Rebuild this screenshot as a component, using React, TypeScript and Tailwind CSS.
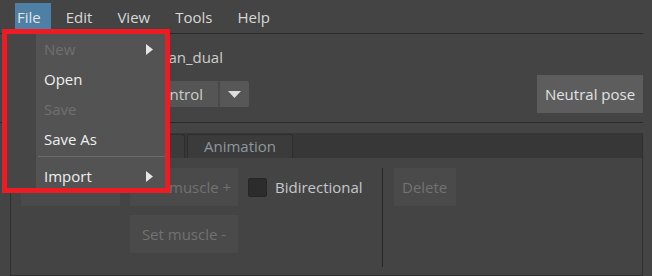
import React from "react";

function MenuArrow() {
  return (
    <svg width="7" height="11" viewBox="0 0 7 11">
      <polygon points="0,0 7,5.5 0,11" fill="#e6e6e6" />
    </svg>
  );
}

function App() {
  const menus = ["File", "Edit", "View", "Tools", "Help"];

  return (
    <div className="relative w-[652px] h-[276px] overflow-hidden bg-[#444444] text-[15px] font-['Open_Sans',sans-serif] flex flex-col">
      {/* menubar */}
      <div className="flex h-[33px] items-start gap-[13px] pl-[15px] pt-[3px] text-[#d8d8d8]">
        {menus.map((m) => (
          <div
            key={m}
            className={
              m === "File"
                ? "flex h-[26px] items-center pl-[2px] pr-[10px] pt-[2px] bg-[#4e7fa5] text-[#e4e4e4]"
                : "flex h-[26px] items-center pl-[2px] pr-[10px] pt-[2px]"
            }
          >
            {m}
          </div>
        ))}
      </div>
      <div className="h-px bg-[#2b2b2b] mr-[9px]" />

      <div className="pl-[10px] pr-[9px]">
        <div className="flex h-[41px] items-center pt-[6px] text-[#cdcdcd]">
          <div className="w-[213px] text-right whitespace-nowrap">an_dual</div>
        </div>
        <div className="flex h-[38px] items-center justify-between">
          <div className="flex h-[26px] text-[#cdcdcd]">
            <div className="flex w-[208px] items-center justify-end pr-[15px] bg-[#555555] rounded-l-[2px] whitespace-nowrap">
              ntrol
            </div>
            <div className="w-[2px] bg-[#4a4a4a]" />
            <div className="flex w-[29px] items-center justify-center bg-[#575757] rounded-r-[2px]">
              <svg width="13" height="7" viewBox="0 0 13 7">
                <polygon points="0,0 13,0 6.5,7" fill="#dedede" />
              </svg>
            </div>
          </div>
          <button className="h-[38px] w-[106px] bg-[#5d5d5d] text-[#e2e2e2]">Neutral pose</button>
        </div>
      </div>
      <div className="mt-[9px] h-px bg-[#2b2b2b] mr-[9px]" />

      <div className="flex flex-1 flex-col pl-[10px] pr-[9px] pt-[10px]">
        {/* tabs */}
        <div className="flex h-[25px] items-end gap-[2px] bg-[#373737] border-x border-[#2e2e2e]">
          <div className="h-[25px] w-[78px] bg-[#444444]" />
          <div className="h-[24px] w-[94px] rounded-t-[3px] border border-b-0 border-[#2e2e2e] bg-[#3b3b3b]" />
          <div className="flex h-[24px] w-[106px] items-center justify-center rounded-t-[3px] border border-b-0 border-[#2e2e2e] bg-[#3b3b3b] text-[#8e979e]">
            Animation
          </div>
        </div>

        {/* panel */}
        <div className="flex flex-1 items-start gap-[10px] border-x border-b border-[#2e2e2e] bg-[#444444] pl-[10px] pt-[10px] text-[#727272]">
          <button className="h-[38px] w-[99px] bg-[#4a4a4a]" />
          <div className="flex flex-col gap-[9px]">
            <button className="h-[38px] w-[108px] bg-[#4a4a4a] pl-[39px] text-left">muscle +</button>
            <button className="h-[38px] w-[108px] bg-[#4a4a4a]">Set muscle -</button>
          </div>
          <div className="flex h-[38px] items-center gap-[8px]">
            <div className="h-[19px] w-[19px] rounded-[2px] border border-[#262626] bg-[#2c2c2c]" />
            <span className="text-[#c4c8cc]">Bidirectional</span>
          </div>
          <div className="ml-[9px] h-[99px] w-px bg-[#262626]" />
          <button className="ml-[1px] h-[38px] w-[62px] bg-[#4a4a4a]">Delete</button>
        </div>
      </div>

      {/* open File menu, outlined in red */}
      <div className="absolute left-[2px] top-[29px] flex h-[164px] w-[168px] border-[5px] border-[#ed1c24]">
        <div className="w-[29px] bg-[#464646]" />
        <div className="flex flex-1 flex-col bg-[#535353] text-[#f0f0f0]">
          <div className="flex h-[30px] items-center justify-between pl-[8px] pr-[12px] text-[#707070]">
            New
            <MenuArrow />
          </div>
          <div className="flex h-[30px] items-center pl-[8px]">Open</div>
          <div className="flex h-[30px] items-center pl-[8px] text-[#707070]">Save</div>
          <div className="flex h-[30px] items-center pl-[8px]">Save As</div>
          <div className="h-[7px] pt-[2px] pl-[2px]">
            <div className="h-px bg-[#6c6c6c]" />
          </div>
          <div className="flex h-[27px] items-center justify-between pl-[8px] pr-[12px] pt-[3px]">
            Import
            <MenuArrow />
          </div>
        </div>
      </div>
    </div>
  );
}

export default App;
